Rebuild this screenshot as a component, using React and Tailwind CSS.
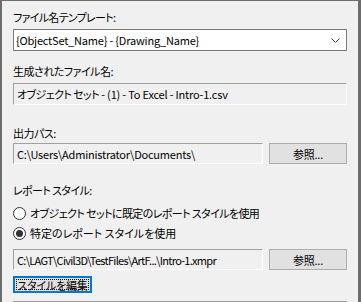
import React from "react";

const font = {
  fontFamily: '"Noto Sans CJK JP", "Noto Sans", sans-serif',
};

function Radio({ checked, label, tracking }) {
  return (
    <div className="flex items-center h-[20px]">
      <span className="w-[13px] h-[13px] rounded-full border border-[#333333] bg-white flex items-center justify-center">
        {checked && <span className="w-[7px] h-[7px] rounded-full bg-[#333333]" />}
      </span>
      <span className={"ml-[4px] " + tracking}>{label}</span>
    </div>
  );
}

function BrowseButton() {
  return (
    <div className="w-[78px] h-[21px] bg-[#e1e1e1] border border-[#adadad] flex items-center justify-center">
      参照...
    </div>
  );
}

function SunkenBox({ children, className = "" }) {
  return (
    <div
      className={
        "h-[21px] border-t border-l border-[#a0a0a0] border-r border-b border-r-white border-b-white flex items-center pl-[3px] whitespace-nowrap overflow-hidden " +
        className
      }
    >
      {children}
    </div>
  );
}

export default function App() {
  return (
    <div
      className="w-[361px] h-[302px] bg-[#f0f0f0] border-l-2 border-t border-r-[3px] border-[#6d6d6d] pl-[11px] pr-[11px] text-[11px] leading-[16px] text-black overflow-hidden tracking-[-0.2px] [font-feature-settings:'palt']"
      style={font}
    >
      <div className="mt-[8px] tracking-[-0.7px]">ファイル名テンプレート:</div>
      <div className="mt-[4px] h-[22px] bg-white border border-[#7a7a7a] flex items-center pl-[2px] pr-[6px]">
        <span className="flex-1">{"{ObjectSet_Name} - {Drawing_Name}"}</span>
        <svg width="9" height="5" viewBox="0 0 9 5" className="text-[#444]">
          <polyline points="0.5,0.5 4.5,4.5 8.5,0.5" fill="none" stroke="currentColor" strokeWidth="1" />
        </svg>
      </div>

      <div className="mt-[12px] tracking-[-0.5px]">生成されたファイル名:</div>
      <SunkenBox className="mt-[4px] h-[22px]">
        <span className="tracking-[-0.6px]">オブジェクト セット</span>
        <span>&nbsp;- (1) - To Excel - Intro-1.csv</span>
      </SunkenBox>

      <div className="mt-[20px] tracking-[-0.5px]">出力パス:</div>
      <div className="mt-[2px] flex items-center gap-[6px]">
        <SunkenBox className="w-[250px]">C:\Users\Administrator\Documents\</SunkenBox>
        <BrowseButton />
      </div>

      <div className="mt-[18px] tracking-[-0.6px]">レポート スタイル:</div>
      <div className="mt-[5px]">
        <Radio tracking="tracking-[-0.6px]" label="オブジェクト セットに既定のレポート スタイルを使用" />
      </div>
      <Radio checked tracking="tracking-[0px]" label="特定のレポート スタイルを使用" />
      <div className="mt-[6px] flex items-center gap-[6px]">
        <SunkenBox className="w-[250px]">
          <span className="tracking-[-0.7px]">C:\LAGT\Civil3D\TestFiles\ArtF...\Intro-1.xmpr</span>
        </SunkenBox>
        <BrowseButton />
      </div>
      <div className="mt-[6px] w-[79px] h-[17px] bg-[#e1e1e1] border-2 border-[#0078d7] p-[1px]">
        <div className="w-full h-full border border-dotted border-black flex items-center justify-center leading-[12px] whitespace-nowrap">
          スタイルを編集
        </div>
      </div>
      <div className="mt-[8px] h-[22px] border-t border-l border-[#a0a0a0]" />
    </div>
  );
}
